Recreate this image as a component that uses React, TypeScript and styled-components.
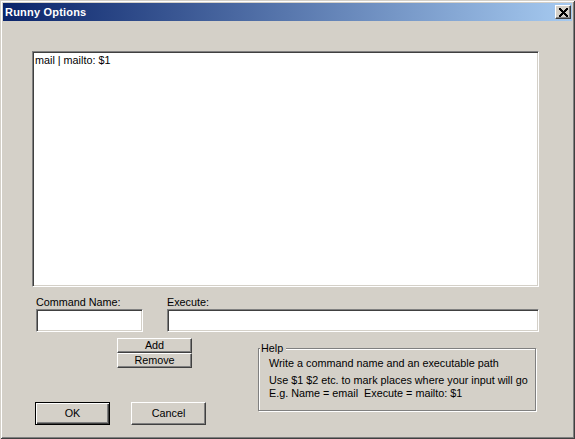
import React from 'react';
import styled, { createGlobalStyle } from 'styled-components';

const Global = createGlobalStyle`
  html, body { margin: 0; padding: 0; background: #d4d0c8; }
  body {
    font-family: "Liberation Sans", Arial, sans-serif;
    font-size: 10.8px;
    color: #000;
  }
  * { box-sizing: border-box; }
`;

const Window = styled.div`
  width: 575px;
  height: 439px;
  padding: 3px;
  background: #d4d0c8;
  box-shadow:
    inset 1px 1px 0 #d4d0c8,
    inset -1px -1px 0 #404040,
    inset 2px 2px 0 #ffffff,
    inset -2px -2px 0 #808080;
  display: flex;
  flex-direction: column;
  overflow: hidden;
`;

const TitleBar = styled.div`
  height: 18px;
  flex: none;
  display: flex;
  align-items: center;
  justify-content: space-between;
  padding: 0 1px 0 2px;
  background: linear-gradient(to right, #0a246a, #a6caf0);
`;

const Title = styled.span`
  color: #fff;
  font-weight: bold;
  font-size: 11px;
  line-height: 13px;
  letter-spacing: 0.2px;
`;

const CloseButton = styled.button`
  width: 16px;
  height: 14px;
  padding: 0;
  margin: 0;
  display: flex;
  align-items: center;
  justify-content: center;
  background: #d4d0c8;
  border: 1px solid;
  border-color: #fff #404040 #404040 #fff;
  box-shadow: inset -1px -1px 0 #808080;
`;

const Body = styled.div`
  flex: 1;
  display: flex;
  flex-direction: column;
  padding: 30px 33px 0 29px;
`;

const ListBox = styled.div`
  height: 236px;
  background: #fff;
  border: 1px solid;
  border-color: #808080 #fff #fff #808080;
  box-shadow: inset 1px 1px 0 #404040, inset -1px -1px 0 #d4d0c8;
  padding: 2px 2px;
  line-height: 13px;
`;

const FieldRow = styled.div`
  display: flex;
  gap: 24px;
  margin-top: 9px;
  padding-left: 4px;
`;

const Field = styled.label<{ $width?: number }>`
  display: flex;
  flex-direction: column;
  ${(p) => (p.$width ? `width: ${p.$width}px; flex: none;` : 'flex: 1;')}
`;

const Label = styled.span`
  line-height: 13px;
  height: 13px;
`;

const TextInput = styled.input`
  height: 23px;
  width: 100%;
  margin: 0;
  padding: 2px 3px;
  font: inherit;
  background: #fff;
  border: 1px solid;
  border-color: #808080 #fff #fff #808080;
  box-shadow: inset 1px 1px 0 #404040, inset -1px -1px 0 #d4d0c8;
  outline: none;
`;

const Lower = styled.div`
  display: flex;
  align-items: flex-start;
`;

const LeftColumn = styled.div`
  width: 226px;
  flex: none;
  display: flex;
  flex-direction: column;
`;

const SmallButtons = styled.div`
  display: flex;
  flex-direction: column;
  margin: 6px 0 0 85px;
`;

const Button = styled.button<{ $h: number; $default?: boolean }>`
  width: 75px;
  height: ${(p) => p.$h}px;
  margin: 0;
  padding: 0;
  font: inherit;
  color: #000;
  line-height: 13px;
  background: #d4d0c8;
  display: flex;
  align-items: center;
  justify-content: center;
  ${(p) =>
    p.$default
      ? `border: 1px solid #000;
         box-shadow: inset 1px 1px 0 #fff, inset -1px -1px 0 #404040, inset -2px -2px 0 #808080;`
      : `border: 1px solid;
         border-color: #fff #404040 #404040 #fff;
         box-shadow: inset -1px -1px 0 #808080;`}
`;

const DialogButtons = styled.div`
  display: flex;
  gap: 21px;
  margin: 34px 0 0 3px;
`;

const GroupBox = styled.div`
  position: relative;
  width: 278px;
  height: 63px;
  margin-top: 16px;
  border: 1px solid #808080;
  box-shadow: 1px 1px 0 #fff, inset 1px 1px 0 #fff;
  padding: 8px 0 0 10px;
`;

const Legend = styled.span`
  position: absolute;
  top: -7px;
  left: 1px;
  padding: 0 3px 0 1px;
  background: #d4d0c8;
  line-height: 13px;
`;

const HelpLine = styled.div<{ $gap?: number }>`
  line-height: 13px;
  margin-top: ${(p) => p.$gap ?? 0}px;
  white-space: nowrap;
`;

const CloseGlyph = () => {
  const px: [number, number][] = [];
  const rows = [
    'XX.....XX',
    'XXX...XXX',
    '.XXX.XXX.',
    '..XXXXX..',
    '...XXX...',
    '..XXXXX..',
    '.XXX.XXX.',
    'XXX...XXX',
    'XX.....XX',
  ];
  rows.forEach((r, y) =>
    r.split('').forEach((c, x) => {
      if (c === 'X') px.push([x, y]);
    })
  );
  return (
    <svg width="9" height="9" viewBox="0 0 9 9" shapeRendering="crispEdges">
      {px.map(([x, y]) => (
        <rect key={`${x}-${y}`} x={x} y={y} width="1" height="1" fill="#000" />
      ))}
    </svg>
  );
};

export default function App() {
  return (
    <>
      <Global />
      <Window>
        <TitleBar>
          <Title>Runny Options</Title>
          <CloseButton aria-label="Close">
            <CloseGlyph />
          </CloseButton>
        </TitleBar>
        <Body>
          <ListBox>mail | mailto: $1</ListBox>
          <FieldRow>
            <Field $width={107}>
              <Label>Command Name:</Label>
              <TextInput />
            </Field>
            <Field>
              <Label>Execute:</Label>
              <TextInput />
            </Field>
          </FieldRow>
          <Lower>
            <LeftColumn>
              <SmallButtons>
                <Button $h={15}>Add</Button>
                <Button $h={15}>Remove</Button>
              </SmallButtons>
              <DialogButtons>
                <Button $h={23} $default>OK</Button>
                <Button $h={23}>Cancel</Button>
              </DialogButtons>
            </LeftColumn>
            <GroupBox>
              <Legend>Help</Legend>
              <HelpLine>Write a command name and an executable path</HelpLine>
              <HelpLine $gap={4}>Use $1 $2 etc. to mark places where your input will go</HelpLine>
              <HelpLine>E.g. Name = email&nbsp; Execute = mailto: $1</HelpLine>
            </GroupBox>
          </Lower>
        </Body>
      </Window>
    </>
  );
}
